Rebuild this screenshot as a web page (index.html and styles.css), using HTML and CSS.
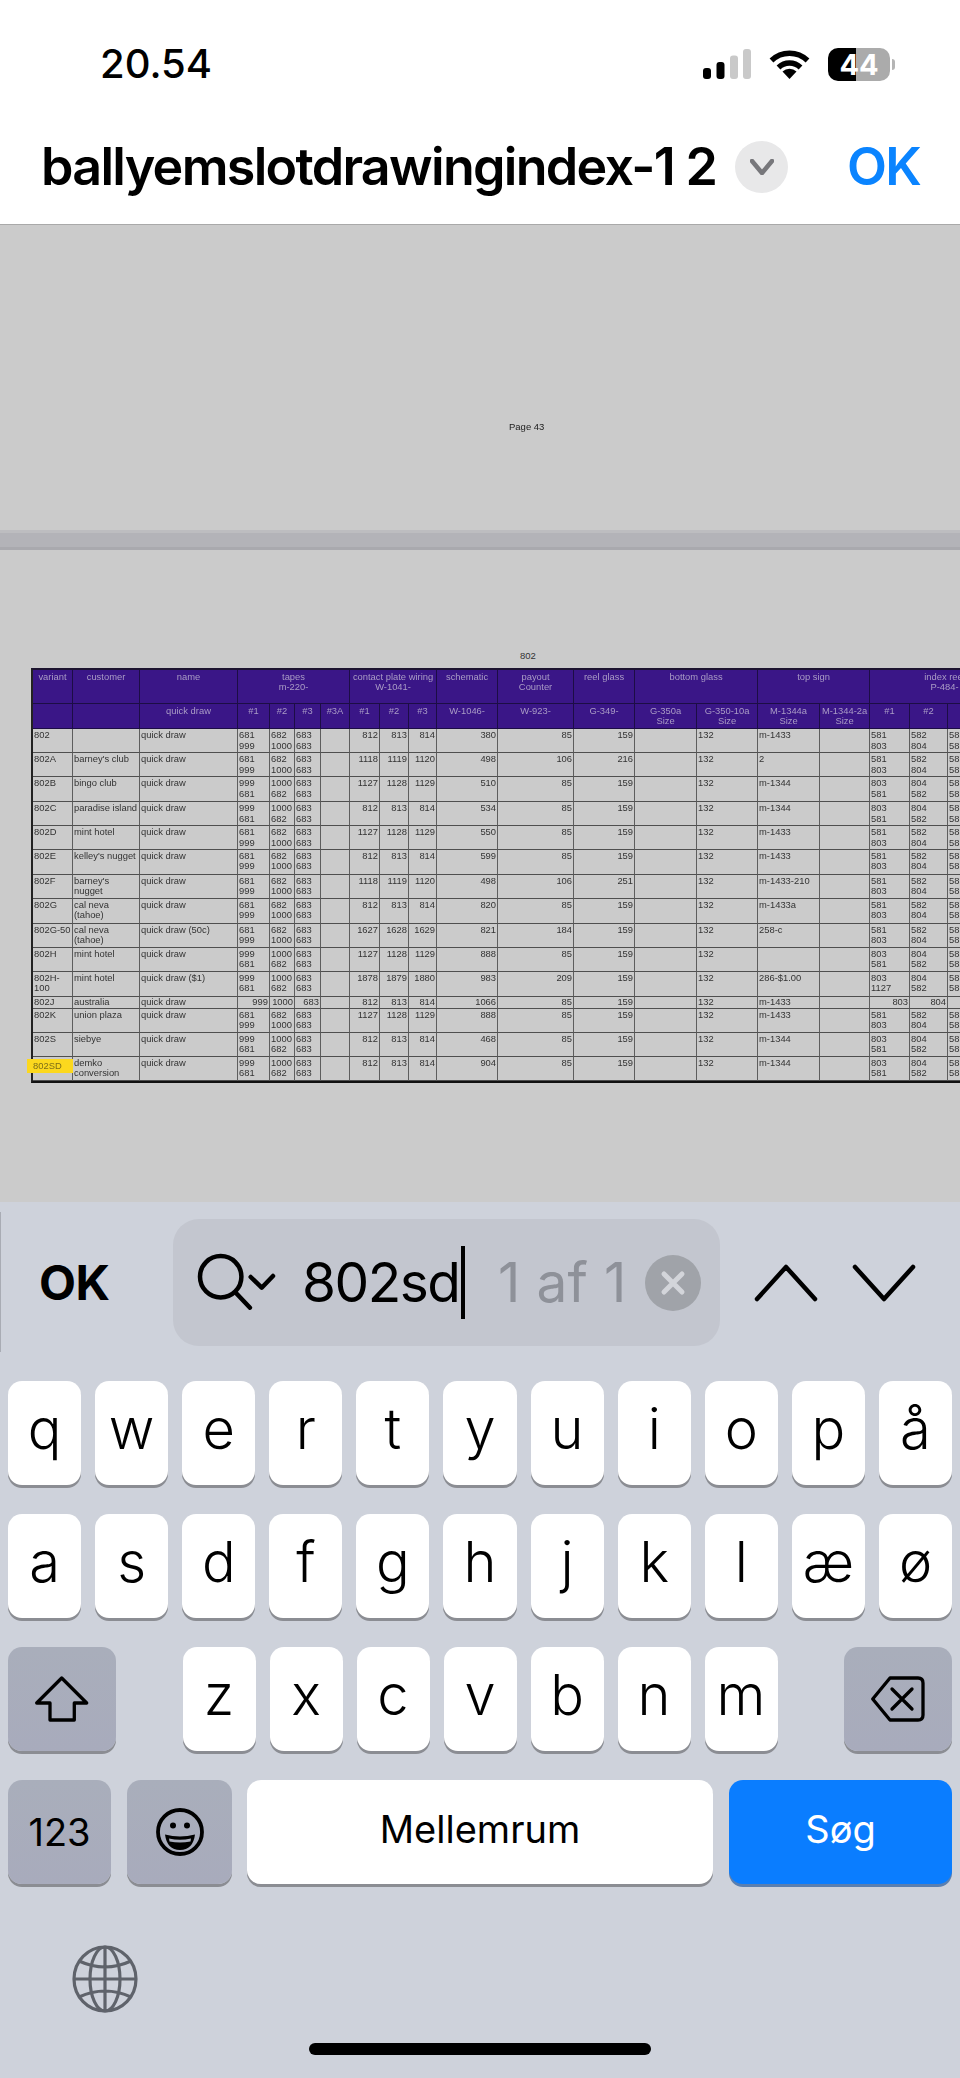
FILE: index.html
```html
<!DOCTYPE html>
<html lang="da">
<head>
<meta charset="utf-8">
<title>ballyemslotdrawingindex-1 2</title>
<link rel="stylesheet" href="styles.css">
</head>
<body>
<div class="app">
  <header class="top">
    <div class="status">
      <span class="time">20.54</span>
      <div class="status-icons">
        <svg class="signal" viewBox="0 0 48 30" width="48" height="30"><rect x="0" y="19" width="8" height="11" rx="3"/><rect x="13.5" y="13" width="8" height="17" rx="3"/><rect class="dim" x="27" y="6.500" width="8" height="23.500" rx="3"/><rect class="dim" x="40" y="0" width="8" height="30" rx="3"/></svg>
        <svg class="wifi" viewBox="0 0 41 30" width="41" height="30"><path class="arc" d="M2.500 11.500A26 26 0 0 1 38.500 11.500"/><path class="arc" d="M9.500 18.500A16 16 0 0 1 31.500 18.500"/><path d="M20.500 30L13.500 22.500A10.500 10.500 0 0 1 27.500 22.500Z"/></svg>
        <div class="battery">44</div>
      </div>
    </div>
    <div class="nav">
      <h1 class="title">ballyemslotdrawingindex-1 2</h1>
      <button class="more"><svg viewBox="0 0 24 16" width="24" height="16"><path d="M2 2L12 14L22 2"/></svg></button>
      <span class="done">OK</span>
    </div>
  </header>
  <main class="viewer">
    <section class="page-end"><span class="page-no">Page 43</span></section>
    <div class="divider"></div>
    <section class="sheet">
      <div class="sheet-label">802</div>
      <table class="index">
        <colgroup><col class="w40"><col class="w67"><col class="w98"><col class="w32"><col class="w25"><col class="w26"><col class="w29"><col class="w30"><col class="w29"><col class="w28"><col class="w61"><col class="w76"><col class="w61"><col class="w62"><col class="w61"><col class="w62"><col class="w50"><col class="w40"><col class="w38"><col class="w38"><col class="w34"></colgroup>
        <thead>
          <tr class="h36"><th>variant</th><th>customer</th><th>name</th><th colspan="4">tapes<br>m-220-</th><th colspan="3">contact plate wiring<br>W-1041-</th><th>schematic</th><th>payout<br>Counter</th><th>reel glass</th><th colspan="2">bottom glass</th><th colspan="2">top sign</th><th colspan="4">index reel<br>P-484-</th></tr>
          <tr class="h25"><th></th><th></th><th>quick draw</th><th>#1</th><th>#2</th><th>#3</th><th>#3A</th><th>#1</th><th>#2</th><th>#3</th><th>W-1046-</th><th>W-923-</th><th>G-349-</th><th>G-350a<br>Size</th><th>G-350-10a<br>Size</th><th>M-1344a<br>Size</th><th>M-1344-2a<br>Size</th><th>#1</th><th>#2</th><th>#3</th><th>#4</th></tr>
        </thead>
        <tbody>
          <tr class="h24"><td>802</td><td></td><td>quick draw</td><td>681<br>999</td><td>682<br>1000</td><td>683<br>683</td><td></td><td class="n">812</td><td class="n">813</td><td class="n">814</td><td class="n">380</td><td class="n">85</td><td class="n">159</td><td></td><td>132</td><td>m-1433</td><td></td><td>581<br>803</td><td>582<br>804</td><td>583<br>583</td><td></td></tr>
          <tr class="h24"><td>802A</td><td>barney's club</td><td>quick draw</td><td>681<br>999</td><td>682<br>1000</td><td>683<br>683</td><td></td><td class="n">1118</td><td class="n">1119</td><td class="n">1120</td><td class="n">498</td><td class="n">106</td><td class="n">216</td><td></td><td>132</td><td>2</td><td></td><td>581<br>803</td><td>582<br>804</td><td>583<br>583</td><td></td></tr>
          <tr class="h25"><td>802B</td><td>bingo club</td><td>quick draw</td><td>999<br>681</td><td>1000<br>682</td><td>683<br>683</td><td></td><td class="n">1127</td><td class="n">1128</td><td class="n">1129</td><td class="n">510</td><td class="n">85</td><td class="n">159</td><td></td><td>132</td><td>m-1344</td><td></td><td>803<br>581</td><td>804<br>582</td><td>583<br>583</td><td></td></tr>
          <tr class="h24"><td>802C</td><td>paradise island</td><td>quick draw</td><td>999<br>681</td><td>1000<br>682</td><td>683<br>683</td><td></td><td class="n">812</td><td class="n">813</td><td class="n">814</td><td class="n">534</td><td class="n">85</td><td class="n">159</td><td></td><td>132</td><td>m-1344</td><td></td><td>803<br>581</td><td>804<br>582</td><td>583<br>583</td><td></td></tr>
          <tr class="h23"><td>802D</td><td>mint hotel</td><td>quick draw</td><td>681<br>999</td><td>682<br>1000</td><td>683<br>683</td><td></td><td class="n">1127</td><td class="n">1128</td><td class="n">1129</td><td class="n">550</td><td class="n">85</td><td class="n">159</td><td></td><td>132</td><td>m-1433</td><td></td><td>581<br>803</td><td>582<br>804</td><td>583<br>583</td><td></td></tr>
          <tr class="h25"><td>802E</td><td>kelley's nugget</td><td>quick draw</td><td>681<br>999</td><td>682<br>1000</td><td>683<br>683</td><td></td><td class="n">812</td><td class="n">813</td><td class="n">814</td><td class="n">599</td><td class="n">85</td><td class="n">159</td><td></td><td>132</td><td>m-1433</td><td></td><td>581<br>803</td><td>582<br>804</td><td>583<br>583</td><td></td></tr>
          <tr class="h24"><td>802F</td><td>barney's<br>nugget</td><td>quick draw</td><td>681<br>999</td><td>682<br>1000</td><td>683<br>683</td><td></td><td class="n">1118</td><td class="n">1119</td><td class="n">1120</td><td class="n">498</td><td class="n">106</td><td class="n">251</td><td></td><td>132</td><td>m-1433-210</td><td></td><td>581<br>803</td><td>582<br>804</td><td>583<br>583</td><td></td></tr>
          <tr class="h25"><td>802G</td><td>cal neva<br>(tahoe)</td><td>quick draw</td><td>681<br>999</td><td>682<br>1000</td><td>683<br>683</td><td></td><td class="n">812</td><td class="n">813</td><td class="n">814</td><td class="n">820</td><td class="n">85</td><td class="n">159</td><td></td><td>132</td><td>m-1433a</td><td></td><td>581<br>803</td><td>582<br>804</td><td>583<br>583</td><td></td></tr>
          <tr class="h24"><td>802G-50</td><td>cal neva<br>(tahoe)</td><td>quick draw (50c)</td><td>681<br>999</td><td>682<br>1000</td><td>683<br>683</td><td></td><td class="n">1627</td><td class="n">1628</td><td class="n">1629</td><td class="n">821</td><td class="n">184</td><td class="n">159</td><td></td><td>132</td><td>258-c</td><td></td><td>581<br>803</td><td>582<br>804</td><td>583<br>583</td><td></td></tr>
          <tr class="h24"><td>802H</td><td>mint hotel</td><td>quick draw</td><td>999<br>681</td><td>1000<br>682</td><td>683<br>683</td><td></td><td class="n">1127</td><td class="n">1128</td><td class="n">1129</td><td class="n">888</td><td class="n">85</td><td class="n">159</td><td></td><td>132</td><td></td><td></td><td>803<br>581</td><td>804<br>582</td><td>583<br>583</td><td></td></tr>
          <tr class="h25"><td>802H-<br>100</td><td>mint hotel</td><td>quick draw ($1)</td><td>999<br>681</td><td>1000<br>682</td><td>683<br>683</td><td></td><td class="n">1878</td><td class="n">1879</td><td class="n">1880</td><td class="n">983</td><td class="n">209</td><td class="n">159</td><td></td><td>132</td><td>286-$1.00</td><td></td><td>803<br>1127</td><td>804<br>582</td><td>583<br>583</td><td></td></tr>
          <tr class="h12"><td>802J</td><td>australia</td><td>quick draw</td><td class="n">999</td><td class="n">1000</td><td class="n">683</td><td></td><td class="n">812</td><td class="n">813</td><td class="n">814</td><td class="n">1066</td><td class="n">85</td><td class="n">159</td><td></td><td>132</td><td>m-1433</td><td></td><td class="n">803</td><td class="n">804</td><td></td><td></td></tr>
          <tr class="h24"><td>802K</td><td>union plaza</td><td>quick draw</td><td>681<br>999</td><td>682<br>1000</td><td>683<br>683</td><td></td><td class="n">1127</td><td class="n">1128</td><td class="n">1129</td><td class="n">888</td><td class="n">85</td><td class="n">159</td><td></td><td>132</td><td>m-1433</td><td></td><td>581<br>803</td><td>582<br>804</td><td>583<br>583</td><td></td></tr>
          <tr class="h24"><td>802S</td><td>siebye</td><td>quick draw</td><td>999<br>681</td><td>1000<br>682</td><td>683<br>683</td><td></td><td class="n">812</td><td class="n">813</td><td class="n">814</td><td class="n">468</td><td class="n">85</td><td class="n">159</td><td></td><td>132</td><td>m-1344</td><td></td><td>803<br>581</td><td>804<br>582</td><td>583<br>583</td><td></td></tr>
          <tr class="h24"><td class="hit-cell"><span class="hit">802SD</span></td><td>demko<br>conversion</td><td>quick draw</td><td>999<br>681</td><td>1000<br>682</td><td>683<br>683</td><td></td><td class="n">812</td><td class="n">813</td><td class="n">814</td><td class="n">904</td><td class="n">85</td><td class="n">159</td><td></td><td>132</td><td>m-1344</td><td></td><td>803<br>581</td><td>804<br>582</td><td>583<br>583</td><td></td></tr>
        </tbody>
      </table>
    </section>
  </main>
  <section class="panel">
    <div class="findbar">
      <span class="find-ok">OK</span>
      <div class="field">
        <svg class="glass" viewBox="0 0 90 64" width="90" height="64"><circle cx="28.700" cy="25.700" r="20.700"/><path d="M44 42L58 56.700"/><path d="M58.700 26L69.700 36.700L81 25"/></svg>
        <span class="query">802sd</span><span class="caret"></span>
        <span class="count">1 af 1</span>
        <svg class="clear" viewBox="0 0 56 56" width="56" height="56"><circle cx="28" cy="28" r="28"/><path d="M19 19L37 37M37 19L19 37"/></svg>
      </div>
      <div class="arrows">
        <svg viewBox="0 0 64 38" width="64" height="38"><path d="M3 35L32 3L61 35"/></svg>
        <svg viewBox="0 0 64 38" width="64" height="38"><path d="M3 3L32 35L61 3"/></svg>
      </div>
    </div>
    <div class="keys">
      <div class="row"><span class="key">q</span><span class="key">w</span><span class="key">e</span><span class="key">r</span><span class="key">t</span><span class="key">y</span><span class="key">u</span><span class="key">i</span><span class="key">o</span><span class="key">p</span><span class="key">å</span></div>
      <div class="row"><span class="key">a</span><span class="key">s</span><span class="key">d</span><span class="key">f</span><span class="key">g</span><span class="key">h</span><span class="key">j</span><span class="key">k</span><span class="key">l</span><span class="key">æ</span><span class="key">ø</span></div>
      <div class="row row-split">
        <span class="key fn w-side"><svg class="line-icon" viewBox="0 0 56 48" width="56" height="48"><path d="M27.700 3L52.700 28H40.300V45H16V28H2.700Z"/></svg></span>
        <div class="letters"><span class="key">z</span><span class="key">x</span><span class="key">c</span><span class="key">v</span><span class="key">b</span><span class="key">n</span><span class="key">m</span></div>
        <span class="key fn w-side"><svg class="line-icon" viewBox="0 0 60 52" width="60" height="52"><path d="M4.700 26L22 5H50Q55 5 55 10V42Q55 47 50 47H22Z"/><path d="M24 16L44 36M44 16L24 36"/></svg></span>
      </div>
      <div class="row row-bottom">
        <span class="key fn small w-123">123</span>
        <span class="key fn w-emoji"><svg class="emoji" viewBox="0 0 48 48" width="48" height="48"><circle class="face" cx="24" cy="24" r="22"/><circle cx="17" cy="17.500" r="3"/><circle cx="31" cy="17.500" r="3"/><path d="M9 26.500Q24 30.500 39 26.500Q37 42 24 42Q11 42 9 26.500Z"/><path class="teeth" d="M13 30.500Q24 33 35 30.500L34.500 33.500Q24 35.500 13.500 33.500Z"/></svg></span>
        <span class="key small w-space">Mellemrum</span>
        <span class="key small go">Søg</span>
      </div>
    </div>
    <div class="globe-row">
      <svg class="globe" viewBox="0 0 66 68" width="66" height="68"><ellipse cx="33" cy="34" rx="31" ry="32"/><ellipse cx="33" cy="34" rx="15" ry="32"/><path d="M33 2V66M2 34H64M7 16Q33 28 59 16M7 52Q33 40 59 52"/></svg>
    </div>
    <div class="home-bar"></div>
  </section>
</div>
</body>
</html>
```

FILE: styles.css
```css
* { box-sizing: border-box; }
html, body { margin: 0; padding: 0; }
body { width: 960px; height: 2078px; overflow: hidden; background: #fff; font-family: Inter, "Liberation Sans", sans-serif; color: #000; }
.app { display: flex; flex-direction: column; width: 960px; height: 2078px; }

/* header */
.top { height: 225px; background: #fff; border-bottom: 1px solid #a9a9a9; }
.status { height: 128px; display: flex; align-items: center; justify-content: space-between; padding: 0 70px 0 100px; }
.time { font-size: 40px; font-weight: 500; letter-spacing: 0; line-height: 1; }
.status-icons { display: flex; align-items: center; gap: 18px; }
.signal rect { fill: #000; }
.signal rect.dim { fill: #c9c9c9; }
.wifi { fill: #000; }
.wifi .arc { fill: none; stroke: #000; stroke-width: 5.500; }
.battery { position: relative; width: 62px; height: 33px; border-radius: 10px; background: linear-gradient(90deg, #000 45%, #ababab 45%); color: #fff; font-size: 29px; font-weight: 700; line-height: 33px; text-align: center; }
.battery::after { content: ""; position: absolute; left: 64px; top: 11px; width: 3px; height: 11px; border-radius: 0 3px 3px 0; background: #b5b5b5; }
.nav { display: flex; align-items: center; height: 78px; padding: 0 40px 0 41px; }
.title { margin: 0; font-size: 52px; font-weight: 600; letter-spacing: -1.700px; line-height: 1; white-space: nowrap; width: 694px; }
.more { width: 53px; height: 52px; padding: 0; border: 0; border-radius: 50%; background: #e8e8e9; display: flex; align-items: center; justify-content: center; }
.more path { fill: none; stroke: #77777b; stroke-width: 4.500; stroke-linecap: round; stroke-linejoin: round; }
.done { margin-left: auto; color: #0a84ff; font-size: 52px; font-weight: 600; letter-spacing: -1.800px; line-height: 1; }

/* document viewer */
.viewer { height: 977px; background: #cbcbcb; overflow: hidden; }
.page-end { height: 305px; padding: 196px 0 0 509px; }
.page-no { font-family: "Liberation Sans", sans-serif; font-size: 9.500px; line-height: 11px; font-weight: 400; color: #1c1c1c; display: block; filter: blur(.25px); }
.divider { height: 20px; background: #b3b3b8; border-top: 3px solid #bdbdc0; border-bottom: 3px solid #a9a9ae; }
.sheet { padding: 100px 0 0 31px; }
.sheet-label { font-family: "Liberation Sans", sans-serif; font-size: 9.500px; line-height: 11px; color: #333; padding-left: 489px; margin-bottom: 7px; }
.index { table-layout: fixed; width: 987px; border-collapse: separate; border-spacing: 0; font-family: "Liberation Sans", sans-serif; font-size: 9.400px; line-height: 10.800px; filter: blur(.4px); border-left: 2px solid #222; border-top: 2px solid #1d1430; border-bottom: 2px solid #111; }
.w67 { width: 67px; } .w98 { width: 98px; } .w32 { width: 32px; } .w25 { width: 25px; } .w26 { width: 26px; } .w29 { width: 29px; } .w30 { width: 30px; } .w28 { width: 28px; } .w61 { width: 61px; } .w76 { width: 76px; } .w62 { width: 62px; } .w50 { width: 50px; } .w40 { width: 40px; } .w38 { width: 38px; } .w34 { width: 34px; }
.index th { background: #3a1687; color: #aa9cc6; font-weight: 400; text-align: center; vertical-align: top; padding: 1.500px 0 0; border-right: 1px solid #1c0d45; border-bottom: 1px solid #1c0d45; white-space: nowrap; overflow: hidden; }
.index td { vertical-align: top; padding: 1px 1px 0; border-right: 1px solid #5e5e5e; border-bottom: 1px solid #4f4f4f; color: #333; white-space: nowrap; }
.index td.n { text-align: right; }
.h36 { height: 34px; } .h25 { height: 25px; } .h24 { height: 24px; } .h23 { height: 23px; } .h12 { height: 12px; }
.index .h12 td { padding-top: 0; }
.hit-cell { position: relative; }
.hit { position: absolute; left: -6px; top: 2px; width: 46px; height: 14px; padding-left: 6px; background: #fcd81e; color: #7d6d18; line-height: 14px; }

/* find bar + keyboard */
.panel { position: relative; flex: 1; background: #ced2db; }
.findbar { display: flex; align-items: center; height: 127px; margin: 17px 0 35px; padding-left: 39px; }
.findbar::before { content: ""; position: absolute; left: 0; top: 10px; width: 1px; height: 140px; background: #a9acb4; }
.find-ok { width: 134px; font-size: 48px; font-weight: 700; line-height: 1; letter-spacing: -.5px; }
.field { display: flex; align-items: center; width: 547px; height: 127px; padding-left: 19px; border-radius: 26px; background: #c3c6cf; }
.glass { flex: none; margin-right: 20px; fill: none; stroke: #000; stroke-width: 4.500; stroke-linecap: round; stroke-linejoin: round; }
.query { font-size: 55px; font-weight: 400; line-height: 1; letter-spacing: -1.500px; }
.caret { width: 3.500px; height: 73px; margin: 0 33px 0 2px; background: #000; }
.count { width: 147px; font-size: 55px; line-height: 1; color: #8e9199; letter-spacing: .3px; white-space: nowrap; }
.clear { flex: none; }
.clear circle { fill: #a0a3a9; }
.clear path { fill: none; stroke: #d3d5da; stroke-width: 5; stroke-linecap: round; }
.arrows { display: flex; gap: 34px; margin-left: 34px; }
.arrows path { fill: none; stroke: #000; stroke-width: 4.500; stroke-linecap: round; stroke-linejoin: round; }
.keys { display: flex; flex-direction: column; gap: 29px; padding: 0 8px; }
.row { display: flex; gap: 14px; height: 104px; }
.key { flex: 1; display: flex; align-items: center; justify-content: center; padding-bottom: 9px; border-radius: 14px; background: #fff; box-shadow: 0 3px 0 #8b8d93; font-size: 56px; font-weight: 300; line-height: 1; }
.row-split { justify-content: space-between; }
.letters { display: flex; gap: 14px; width: 595px; }
.fn { flex: none; padding-bottom: 0; background: linear-gradient(180deg, #a9aebb, #a8abbc); }
.w-side { width: 108px; }
.w-123 { width: 103px; }
.w-emoji { width: 105px; margin-left: 2px; }
.w-space { flex: none; width: 466px; margin-left: 1px; padding-bottom: 6px; }
.small { font-size: 38px; font-weight: 400; }
.go { background: #0a7dff; color: #fff; box-shadow: 0 3px 0 #5a7fb0; flex: none; width: 223px; margin-left: 2px; padding-bottom: 6px; }
.line-icon { fill: none; stroke: #000; stroke-width: 3.300; stroke-linejoin: round; stroke-linecap: round; }
.emoji { fill: #000; }
.emoji .face { fill: none; stroke: #000; stroke-width: 3.800; }
.emoji .teeth { fill: #a9adbc; }
.globe-row { padding: 61px 0 0 72px; }
.globe { display: block; fill: none; stroke: #5f636b; stroke-width: 3.200; }
.home-bar { width: 342px; height: 12px; margin: 30px auto 0; border-radius: 6px; background: #000; }
```
